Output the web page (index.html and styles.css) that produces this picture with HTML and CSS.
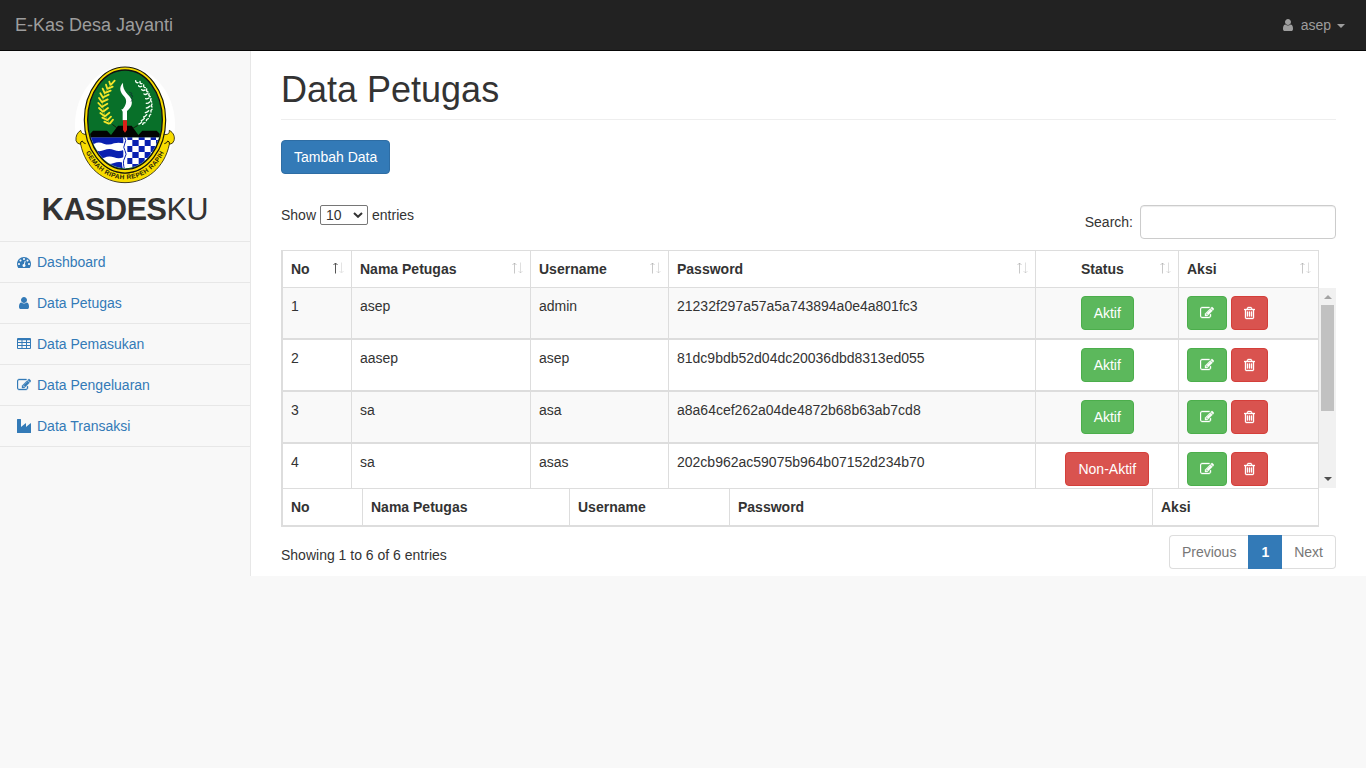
FILE: index.html
```html
<!DOCTYPE html>
<html lang="id">
<head>
<meta charset="utf-8">
<title>E-Kas Desa Jayanti</title>
<link rel="stylesheet" href="styles.css">
</head>
<body>
<svg class="defs" aria-hidden="true">
  <symbol id="i-user" viewBox="0 0 1792 1792"><path d="M1536 1399q0 109-62.5 187t-150.5 78h-854q-88 0-150.5-78t-62.5-187q0-85 8.5-160.5t31.5-152 58.5-131 94-89 134.5-34.5q131 128 313 128t313-128q76 0 134.5 34.5t94 89 58.5 131 31.5 152 8.5 160.5zm-256-887q0 159-112.5 271.5t-271.5 112.5-271.5-112.5-112.5-271.5 112.5-271.5 271.5-112.5 271.5 112.5 112.5 271.5z"/></symbol>
  <symbol id="i-dash" viewBox="0 0 1792 1792"><path d="M384 1152q0-53-37.5-90.5t-90.5-37.5-90.5 37.5-37.5 90.5 37.5 90.5 90.5 37.5 90.5-37.5 37.5-90.5zm192-448q0-53-37.5-90.5t-90.5-37.5-90.5 37.5-37.5 90.5 37.5 90.5 90.5 37.5 90.5-37.5 37.5-90.5zm428 481l101-382q6-26-7.5-48.5t-38.5-29.5-48 6.5-30 39.5l-101 382q-60 5-107 43.5t-63 98.5q-20 77 20 146t117 89 146-20 89-117q16-60-6-117t-72-91zm660-33q0-53-37.5-90.5t-90.5-37.5-90.5 37.5-37.5 90.5 37.5 90.5 90.5 37.5 90.5-37.5 37.5-90.5zm-640-640q0-53-37.5-90.5t-90.5-37.5-90.5 37.5-37.5 90.5 37.5 90.5 90.5 37.5 90.5-37.5 37.5-90.5zm448 192q0-53-37.5-90.5t-90.5-37.5-90.5 37.5-37.5 90.5 37.5 90.5 90.5 37.5 90.5-37.5 37.5-90.5zm320 448q0 261-141 483-19 29-54 29h-1402q-35 0-54-29-141-221-141-483 0-182 71-348t191-286 286-191 348-71 348 71 286 191 191 286 71 348z"/></symbol>
  <symbol id="i-edit" viewBox="0 0 1792 1792"><path d="M888 1184l116-116-152-152-116 116v56h96v96h56zm440-720q-16-16-33 1l-350 350q-17 17-1 33t33-1l350-350q17-17 1-33zm80 594v190q0 119-84.5 203.5t-203.5 84.5h-832q-119 0-203.5-84.5t-84.5-203.5v-832q0-119 84.5-203.5t203.5-84.5h832q63 0 117 25 15 7 18 23 3 17-9 29l-49 49q-14 14-32 8-23-6-45-6h-832q-66 0-113 47t-47 113v832q0 66 47 113t113 47h832q66 0 113-47t47-113v-126q0-13 9-22l64-64q15-15 35-7t20 29zm-96-738l288 288-672 672h-288v-288zm444 132l-92 92-288-288 92-92q28-28 68-28t68 28l152 152q28 28 28 68t-28 68z"/></symbol>
  <symbol id="i-trash" viewBox="192 0 1408 1792"><path d="M704 736v576q0 14-9 23t-23 9h-64q-14 0-23-9t-9-23v-576q0-14 9-23t23-9h64q14 0 23 9t9 23zm256 0v576q0 14-9 23t-23 9h-64q-14 0-23-9t-9-23v-576q0-14 9-23t23-9h64q14 0 23 9t9 23zm256 0v576q0 14-9 23t-23 9h-64q-14 0-23-9t-9-23v-576q0-14 9-23t23-9h64q14 0 23 9t9 23zm128 724v-948h-896v948q0 22 7 40.5t14.5 27 10.5 8.5h832q3 0 10.5-8.5t14.5-27 7-40.5zm-672-1076h448l-48-117q-7-9-17-11h-317q-10 2-17 11zm928 32v64q0 14-9 23t-23 9h-96v948q0 83-47 143.5t-113 60.5h-832q-66 0-113-58.5t-47-141.5v-952h-96q-14 0-23-9t-9-23v-64q0-14 9-23t23-9h309l70-167q15-37 54-63t79-26h320q40 0 79 26t54 63l70 167h309q14 0 23 9t9 23z"/></symbol>
  <symbol id="i-table" viewBox="0 0 14 14"><path fill-rule="evenodd" d="M1 1h12q1 0 1 1v9q0 1-1 1H1q-1 0-1-1V2q0-1 1-1zM1 3.300V5h3.500V3.300zm4.500 0V5H9V3.300zm4.500 0V5h3V3.300zM1 6v2h3.500V6zm4.500 0v2H9V6zm4.500 0v2h3V6zM1 9v2h3.500V9zm4.500 0v2H9V9zm4.500 0v2h3V9z"/></symbol>
  <symbol id="i-industry" viewBox="0 0 14 14"><path d="M0 .4Q0 0 .4 0h3.200q.4 0 .4.4v7.700l4.600-3.800q.4-.2.4.2v3.600l4.500-3.800q.5-.3.500.2v9q0 .5-.5.5H.5q-.5 0-.5-.5z"/></symbol>
  <symbol id="i-sort" viewBox="0 0 11 12"><path opacity=".65" d="M2.500 1v10.500M.5 3l2-2 2 2" fill="none" stroke="currentColor"/><path opacity=".38" d="M8.500.5V11m-2-2 2 2 2-2" fill="none" stroke="currentColor"/></symbol>
</svg>

<header class="navbar">
  <a class="brand">E-Kas Desa Jayanti</a>
  <a class="account"><span class="fw"><svg class="icon"><use href="#i-user"/></svg></span>asep<b class="caret"></b></a>
</header>

<div class="wrapper">
  <nav class="sidebar">
    <div class="profile">
      <svg class="emblem" viewBox="30 30 300 352">
        <defs>
          <clipPath id="field"><ellipse cx="180" cy="189" rx="110" ry="147"/></clipPath>
          <path id="motto" d="M55 268C74 328 124 369 180 369S286 328 305 268"/>
        </defs>
        <ellipse cx="180" cy="206" rx="150" ry="176" fill="#fff"/>
        <path d="M47 222q2 14 21 12C80 300 120 348 180 351c60-3 100-51 112-117 19 2 21-2 21-12 14 8 17 20 14 31q-3 10-14 11C299 333 245 379 180 379S61 333 47 264q-11-1-14-11-2-20 14-31z" fill="#f8dc00" stroke="#221d05" stroke-width="2.500"/>
        <path d="M47 264q-2-9 5-10 1 6 10 8M313 264q2-9-5-10-1 6-10 8" fill="none" stroke="#221d05" stroke-width="3"/>
        <ellipse cx="180" cy="191" rx="122" ry="159" fill="#f8dc00" stroke="#181705" stroke-width="3.500"/>
        <ellipse cx="180" cy="190" rx="112" ry="149" fill="#087029" stroke="#111" stroke-width="4"/>
        <g clip-path="url(#field)">
          <path d="M60 243h240v105H60z" fill="#fff"/>
          <g fill="#0920b0">
            <path d="M60 243h115v18q-15-4-28 0-15 7-31 1-15-7-28 0-15 5-28 0z"/>
            <path d="M60 280q16-5 29 1 14 7 29 0 15-6 29 0 15 6 28 0v22q-14 6-28 0-15-6-29 1-15 5-29-1-14-5-29 0z"/>
            <path d="M90 318q14-4 28 2 14 6 29 0 14-5 28-1v30H90z"/>
            <path d="M187 243h15v8h-15zm34 0h18v8h-18zm36 0h16v8h-16zM202 251h19v18h-19zm37 0h18v18h-18zm34 0h19v18h-19zM187 269h15v18h-15zm34 0h18v18h-18zm36 0h16v18h-16zM202 287h19v18h-19zm37 0h18v18h-18zm34 0h19v18h-19zM187 305h15v18h-15zm34 0h18v18h-18zm36 0h16v18h-16zM202 323h19v18h-19zm37 0h18v18h-18z"/>
          </g>
          <path d="M179 243q6 10 0 20t1 20-1 22 1 38" stroke="#fff" stroke-width="9" fill="none"/>
          <path d="M179 243q6 10 0 20t1 20-1 22 1 38" stroke="#0920b0" stroke-width="3" fill="none"/>
          <path d="M66 243l18-20h42l12 13 21-28h41l20 28 12-13h43l20 20z" fill="#020402"/>
        </g>
        <g fill="none" stroke-linecap="round">
          <path d="M140 82Q113 112 112 145q2 30 20 54" stroke="#b5b81b" stroke-width="2"/>
          <path d="M138 85L149 73M136 85L133 76M129 97L143 91M127 97L123 85M122 109L137 103M119 110L113 97M117 122L131 115M114 124L106 111M114 136L128 129M111 138L102 125M114 150L127 142M111 152L100 140M117 164L129 155M113 166L102 155M122 178L133 169M119 180L106 170M129 190L138 181M126 191L112 184M135 201L144 190M131 202L118 196" stroke="#f4e52a" stroke-width="5.500"/>
          <path d="M212 73Q212 80 219 79M225 75Q224 83 231 82M221 88Q223 93 230 90M236 86Q235 94 241 94M230 100Q233 104 240 101M245 98Q243 106 249 107M237 113Q241 116 247 112M252 112Q250 119 256 121M242 127Q246 129 252 125M258 127Q255 133 260 137M244 141Q249 142 254 137M261 143Q257 148 261 152M244 155Q249 155 254 150M261 159Q256 162 258 167M241 169Q246 168 251 163M257 174Q252 176 253 181M236 182Q241 181 245 175M250 187Q244 188 244 193M229 193Q234 191 238 186M240 199Q234 199 233 204M222 203Q227 202 230 197" stroke="#f4fff4" stroke-width="4.200"/>
          <path d="M143 205l12 9m62-6-12 7" stroke="#14240f" stroke-width="3"/>
        </g>
        <path d="M174 79c-15 16-7 30 4 42 10 12 5 25-5 38h-4l4 7v26h13v-28c10-7 18-19 13-35-5-15-27-22-25-50z" fill="#fff"/>
        <path d="M192 107l9 4-4 5 7 3-5 6 4 4-5 7" fill="none" stroke="#123" stroke-width="1.800"/>
        <path d="M174 192h12v29l-6 8-6-8z" fill="#da2018"/>
        <text class="motto"><textPath href="#motto" startOffset="50%" text-anchor="middle">GEMAH RIPAH REPEH RAPIH</textPath></text>
      </svg>
      <div class="title"><b>KASDES</b>KU</div>
    </div>
    <a class="item"><span class="fw"><svg class="icon"><use href="#i-dash"/></svg></span>Dashboard</a>
    <a class="item"><span class="fw"><svg class="icon"><use href="#i-user"/></svg></span>Data Petugas</a>
    <a class="item"><span class="fw"><svg class="icon"><use href="#i-table"/></svg></span>Data Pemasukan</a>
    <a class="item"><span class="fw"><svg class="icon heavy"><use href="#i-edit"/></svg></span>Data Pengeluaran</a>
    <a class="item"><span class="fw"><svg class="icon"><use href="#i-industry"/></svg></span>Data Transaksi</a>
  </nav>

  <main class="page">
    <h1>Data Petugas</h1>
    <a class="btn primary">Tambah Data</a>
    <div class="controls">
      <label class="length">Show <span class="select">10<svg viewBox="0 0 10 6"><path d="M1 1l4 3.800L9 1" fill="none" stroke="#333" stroke-width="2"/></svg></span> entries</label>
      <label class="search">Search:<input type="text"></label>
    </div>

    <div class="grid">
      <div class="row head">
        <div>No<svg class="sort asc" viewBox="0 0 11 12"><path d="M2.500 1v10.500M.5 3l2-2 2 2" fill="none" stroke="#555"/><path d="M8.500.5V11m-2-2 2 2 2-2" fill="none" stroke="#e4e4e4"/></svg></div>
        <div>Nama Petugas<svg class="sort"><use href="#i-sort"/></svg></div>
        <div>Username<svg class="sort"><use href="#i-sort"/></svg></div>
        <div>Password<svg class="sort"><use href="#i-sort"/></svg></div>
        <div class="status">Status<svg class="sort"><use href="#i-sort"/></svg></div>
        <div>Aksi<svg class="sort"><use href="#i-sort"/></svg></div>
      </div>
      <div class="viewport">
        <div class="rows">
          <div class="row"><div>1</div><div>asep</div><div>admin</div><div>21232f297a57a5a743894a0e4a801fc3</div><div class="status"><a class="btn success">Aktif</a></div><div class="actions"><a class="btn success"><svg class="icon heavy"><use href="#i-edit"/></svg></a><a class="btn danger"><svg class="icon heavy trash"><use href="#i-trash"/></svg></a></div></div>
          <div class="row"><div>2</div><div>aasep</div><div>asep</div><div>81dc9bdb52d04dc20036dbd8313ed055</div><div class="status"><a class="btn success">Aktif</a></div><div class="actions"><a class="btn success"><svg class="icon heavy"><use href="#i-edit"/></svg></a><a class="btn danger"><svg class="icon heavy trash"><use href="#i-trash"/></svg></a></div></div>
          <div class="row"><div>3</div><div>sa</div><div>asa</div><div>a8a64cef262a04de4872b68b63ab7cd8</div><div class="status"><a class="btn success">Aktif</a></div><div class="actions"><a class="btn success"><svg class="icon heavy"><use href="#i-edit"/></svg></a><a class="btn danger"><svg class="icon heavy trash"><use href="#i-trash"/></svg></a></div></div>
          <div class="row"><div>4</div><div>sa</div><div>asas</div><div>202cb962ac59075b964b07152d234b70</div><div class="status"><a class="btn danger">Non-Aktif</a></div><div class="actions"><a class="btn success"><svg class="icon heavy"><use href="#i-edit"/></svg></a><a class="btn danger"><svg class="icon heavy trash"><use href="#i-trash"/></svg></a></div></div>
        </div>
        <div class="scrollbar"><i class="up"></i><i class="thumb"></i><i class="down"></i></div>
      </div>
      <div class="row foot"><div>No</div><div>Nama Petugas</div><div>Username</div><div>Password</div><div>Aksi</div></div>
    </div>

    <div class="bottom">
      <span class="info">Showing 1 to 6 of 6 entries</span>
      <div class="pager"><a>Previous</a><a class="active">1</a><a>Next</a></div>
    </div>
  </main>
</div>
</body>
</html>
```
FILE: styles.css
```css
* { box-sizing: border-box; }
body { margin: 0; background: #f8f8f8; color: #333; font: 14px/20px "Liberation Sans", Arial, sans-serif; }
.defs { display: none; }
.icon { width: 14px; height: 14px; fill: currentColor; vertical-align: -2px; }
.icon.heavy { stroke: currentColor; stroke-width: 45px; }
.icon.trash { width: 11px; }
.fw { display: inline-block; width: 18px; margin-right: 4px; text-align: center; }

.navbar { display: flex; justify-content: space-between; height: 51px; padding: 15px 21px 15px 15px; background: #222; border-bottom: 1px solid #080808; color: #9d9d9d; }
.brand { font-size: 18px; }
.caret { display: inline-block; margin-left: 6px; vertical-align: middle; border: 4px solid transparent; border-top-color: currentColor; border-bottom: 0; }

.wrapper { display: flex; height: 525px; background: #fff; }
.sidebar { width: 251px; background: #f8f8f8; border-right: 1px solid #e7e7e7; }
.profile { height: 191px; padding-top: 15px; border-bottom: 1px solid #e7e7e7; text-align: center; }
.emblem { display: block; width: 100px; height: 118px; margin: 0 auto; }
.motto { font: bold 19.5px "Liberation Sans", Arial, sans-serif; letter-spacing: 1.1px; fill: #29250b; }
.title { margin-top: 8px; font-size: 30.5px; line-height: 34px; letter-spacing: -.4px; }
.item { display: block; height: 41px; padding: 10px 15px; border-bottom: 1px solid #e7e7e7; color: #337ab7; }

.page { flex: 1; padding: 19px 30px 0; }
h1 { height: 50px; margin: 0 0 20px; border-bottom: 1px solid #eee; font-size: 36px; line-height: 39px; font-weight: 400; }
.btn { display: inline-block; height: 34px; padding: 6px 12px; border: 1px solid; border-radius: 4px; color: #fff; }
.primary { background: #337ab7; border-color: #2e6da4; }
.success { background: #5cb85c; border-color: #4cae4c; }
.danger { background: #d9534f; border-color: #d43f3a; }

.controls { display: flex; justify-content: space-between; align-items: flex-start; height: 45px; margin-top: 31px; }
.length { display: flex; gap: 4px; }
.select { display: flex; align-items: center; justify-content: space-between; width: 48px; height: 20px; padding: 0 4px 0 5px; border: 1px solid #767676; border-radius: 2px; background: #fff; }
.select svg { width: 10px; height: 6px; }
.search { display: flex; align-items: center; gap: 7px; }
.search input { width: 196px; height: 34px; border: 1px solid #ccc; border-radius: 4px; box-shadow: inset 0 1px 1px rgba(0,0,0,.075); }

.row { display: grid; grid-template-columns: 69px 179px 138px 367px 143px 140px; width: 1038px; height: 52px; border-left: 2px solid #ddd; border-bottom: 2px solid #ddd; }
.row > div { padding: 8px; border-right: 1px solid #ddd; }
.row .status { padding-right: 7.5px; text-align: center; }
.row .actions { display: flex; gap: 4px; }
.head { height: 38px; border-top: 1px solid #ddd; border-bottom-width: 1px; font-weight: bold; }
.head > div, .head > .status { display: flex; justify-content: space-between; padding-right: 7px; }
.head > .status { padding-left: 45px; }
.sort { width: 11px; height: 12px; margin: 3px 0 0; color: #aaa; }
.viewport { display: flex; height: 200px; overflow: hidden; }
.rows .row:nth-child(odd) { background: #f9f9f9; }
.foot { grid-template-columns: 80px 207px 160px 423px 166px; height: 39px; border-top: 1px solid #ddd; font-weight: bold; }

.scrollbar { display: flex; flex-direction: column; align-items: center; width: 17px; height: 200px; background: #f1f1f1; }
.scrollbar .up { margin: 7px 0 6px; border: 4px solid transparent; border-top: 0; border-bottom-color: #a3a3a3; }
.scrollbar .thumb { width: 13px; height: 106px; background: #c1c1c1; }
.scrollbar .down { margin-top: auto; margin-bottom: 7px; border: 4px solid transparent; border-bottom: 0; border-top-color: #505050; }

.bottom { display: flex; justify-content: space-between; padding-top: 8px; }
.info { padding-top: 10px; }
.pager { display: flex; height: 34px; }
.pager a { padding: 6px 12px; border: 1px solid #ddd; color: #777; }
.pager a:first-child { border-radius: 4px 0 0 4px; border-right: 0; }
.pager a:last-child { border-radius: 0 4px 4px 0; border-left: 0; }
.pager .active { background: #337ab7; border-color: #337ab7; color: #fff; font-weight: bold; }
```
